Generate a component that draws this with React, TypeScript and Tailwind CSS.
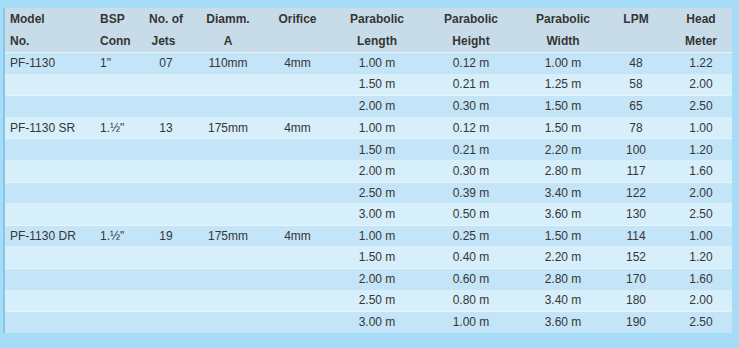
import React from "react";

interface Row {
  model?: string;
  bsp?: string;
  jets?: string;
  diam?: string;
  orifice?: string;
  length: string;
  height: string;
  width: string;
  lpm: string;
  head: string;
}

const rows: Row[] = [
  { model: "PF-1130", bsp: "1\"", jets: "07", diam: "110mm", orifice: "4mm", length: "1.00 m", height: "0.12 m", width: "1.00 m", lpm: "48", head: "1.22" },
  { length: "1.50 m", height: "0.21 m", width: "1.25 m", lpm: "58", head: "2.00" },
  { length: "2.00 m", height: "0.30 m", width: "1.50 m", lpm: "65", head: "2.50" },
  { model: "PF-1130 SR", bsp: "1.½\"", jets: "13", diam: "175mm", orifice: "4mm", length: "1.00 m", height: "0.12 m", width: "1.50 m", lpm: "78", head: "1.00" },
  { length: "1.50 m", height: "0.21 m", width: "2.20 m", lpm: "100", head: "1.20" },
  { length: "2.00 m", height: "0.30 m", width: "2.80 m", lpm: "117", head: "1.60" },
  { length: "2.50 m", height: "0.39 m", width: "3.40 m", lpm: "122", head: "2.00" },
  { length: "3.00 m", height: "0.50 m", width: "3.60 m", lpm: "130", head: "2.50" },
  { model: "PF-1130 DR", bsp: "1.½\"", jets: "19", diam: "175mm", orifice: "4mm", length: "1.00 m", height: "0.25 m", width: "1.50 m", lpm: "114", head: "1.00" },
  { length: "1.50 m", height: "0.40 m", width: "2.20 m", lpm: "152", head: "1.20" },
  { length: "2.00 m", height: "0.60 m", width: "2.80 m", lpm: "170", head: "1.60" },
  { length: "2.50 m", height: "0.80 m", width: "3.40 m", lpm: "180", head: "2.00" },
  { length: "3.00 m", height: "1.00 m", width: "3.60 m", lpm: "190", head: "2.50" },
];

// column boxes, measured off the sheet
const c1 = "w-[90px] pl-[5px] text-left";
const c2 = "w-[50px] pl-[5px] text-left";
const c3 = "w-[42px] text-center";
const c4 = "w-[82px] text-center";
const c5 = "w-[57px] text-center";
const c6 = "w-[102px] text-center";
const c7 = "w-[86px] text-center";
const c8 = "w-[98px] text-center";
const c9 = "w-[48px] text-center";
const c10 = "w-[72px] pl-[10px] text-center";

export default function App() {
  return (
    <div className="w-[739px] h-[348px] bg-[#a6ddf6] pt-[8px] pl-[3px] font-['Liberation_Sans',Arial,sans-serif]">
      <div className="w-[729px] border-l-2 border-[#86c5ec]">
        {/* header */}
        <div className="bg-[#c7dce8] text-[12px] font-bold text-[#353535]">
          <div className="flex h-[22px] items-center">
            <div className={c1}>Model</div>
            <div className={c2}>BSP</div>
            <div className={c3}>No. of</div>
            <div className={c4}>Diamm.</div>
            <div className={c5}>Orifice</div>
            <div className={c6}>Parabolic</div>
            <div className={c7}>Parabolic</div>
            <div className={c8}>Parabolic</div>
            <div className={c9}>LPM</div>
            <div className={c10}>Head</div>
          </div>
          <div className="flex h-[22px] items-center">
            <div className={c1}>No.</div>
            <div className={c2}>Conn</div>
            <div className={c3 + " pr-[5px]"}>Jets</div>
            <div className={c4}>A</div>
            <div className={c5}></div>
            <div className={c6}>Length</div>
            <div className={c7}>Height</div>
            <div className={c8}>Width</div>
            <div className={c9}></div>
            <div className={c10}>Meter</div>
          </div>
        </div>

        {/* data */}
        <div className="text-[12px] text-[#363636]">
          {rows.map((r, i) => (
            <div
              key={i}
              className={
                i % 2 === 0
                  ? "flex h-[21.6px] items-center bg-[#c4e4f7] border-t border-[#e6f4fc]"
                  : "flex h-[21.6px] items-center bg-[#d7eefb]"
              }
            >
              <div className={c1}>{r.model}</div>
              <div className={c2}>{r.bsp}</div>
              <div className={c3}>{r.jets}</div>
              <div className={c4}>{r.diam}</div>
              <div className={c5}>{r.orifice}</div>
              <div className={c6}>{r.length}</div>
              <div className={c7}>{r.height}</div>
              <div className={c8}>{r.width}</div>
              <div className={c9}>{r.lpm}</div>
              <div className={c10}>{r.head}</div>
            </div>
          ))}
        </div>
      </div>
    </div>
  );
}
